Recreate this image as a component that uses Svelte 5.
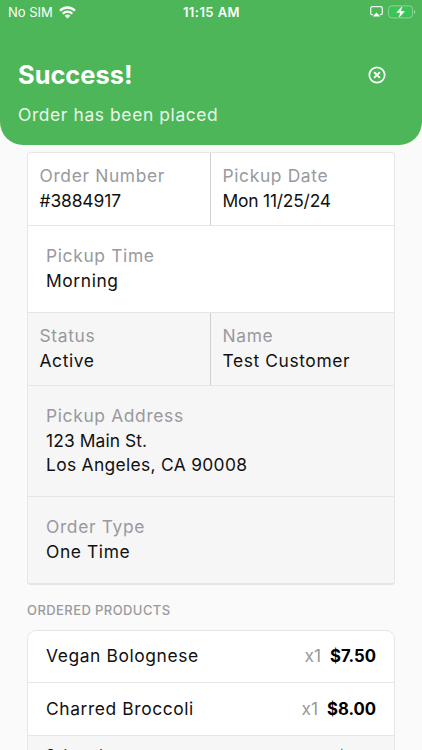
<script lang="ts">
  type Product = { name: string; qty: number; price: string };

  const products: Product[] = [
    { name: "Vegan Bolognese", qty: 1, price: "$7.50" },
    { name: "Charred Broccoli", qty: 1, price: "$8.00" },
  ];
</script>

<div class="screen">
  <header>
    <div class="status-bar">
      <div class="carrier">
        <span>No SIM</span>
        <svg width="17" height="13" viewBox="0 0 17 13" aria-hidden="true">
          <g fill="none" stroke="#fff" stroke-width="2.3">
            <path d="M1 4.7C5.2.4 11.8.4 16 4.7" />
            <path d="M3.7 7.7c2.7-2.7 6.9-2.7 9.6 0" />
          </g>
          <path d="M5.7 9.7c1.6-1.5 4-1.5 5.6 0L8.5 12.6z" fill="#fff" />
        </svg>
      </div>
      <time>11:15 AM</time>
      <div class="indicators">
        <svg width="13" height="12" viewBox="0 0 13 12" aria-hidden="true">
          <path
            d="M3.2 8.6H2.1A1.4 1.4 0 0 1 .7 7.2V2.1A1.4 1.4 0 0 1 2.1.7h8.8a1.4 1.4 0 0 1 1.4 1.4v5.1a1.4 1.4 0 0 1-1.4 1.4H9.8"
            fill="none"
            stroke="#e6f6e8"
            stroke-width="1.3"
          />
          <path d="M6.5 6.4 10.2 10.6H2.8z" fill="#fff" />
        </svg>
        <svg width="28" height="14" viewBox="0 0 28 14" aria-hidden="true">
          <rect x=".6" y=".9" width="24" height="12" rx="3.4" fill="none" stroke="#93d59b" />
          <rect x="2.3" y="2.6" width="20.6" height="8.6" rx="2" fill="#36c759" />
          <path d="M26 5v4q1.4-.6 1.4-2T26 5z" fill="#93d59b" />
          <path
            d="M14.9 0 7.8 7.9h4L10.1 14l7.3-8.1h-4.1z"
            fill="#fff"
            stroke="#4db658"
            stroke-width=".5"
          />
        </svg>
      </div>
    </div>
    <div class="title-row">
      <h1>Success!</h1>
      <button type="button" aria-label="Close">
        <svg width="18" height="18" viewBox="0 0 18 18" aria-hidden="true">
          <g fill="none" stroke="#fff">
            <circle cx="9" cy="9" r="7.7" stroke-width="1.7" />
            <path d="m6.1 6.1 5.8 5.8m0-5.8-5.8 5.8" stroke-width="2" />
          </g>
        </svg>
      </button>
    </div>
    <p class="subtitle">Order has been placed</p>
  </header>

  <main>
    <dl class="details">
      <div class="pair">
        <div><dt>Order Number</dt><dd class="number">#3884917</dd></div>
        <div><dt>Pickup Date</dt><dd class="date">Mon 11/25/24</dd></div>
      </div>
      <div class="single"><dt>Pickup Time</dt><dd>Morning</dd></div>
      <div class="pair shaded">
        <div><dt>Status</dt><dd>Active</dd></div>
        <div><dt>Name</dt><dd>Test Customer</dd></div>
      </div>
      <div class="single shaded">
        <dt>Pickup Address</dt>
        <dd class="street">123 Main St.</dd>
        <dd class="city">Los Angeles, CA 90008</dd>
      </div>
      <div class="single shaded last"><dt>Order Type</dt><dd>One Time</dd></div>
    </dl>

    <h2>ORDERED PRODUCTS</h2>
    <ul>
      {#each products as product}
        <li>
          <span class="name">{product.name}</span>
          <span class="qty">x{product.qty}</span>
          <strong>{product.price}</strong>
        </li>
      {/each}
      <li class="subtotal shaded">
        <span>Subtotal</span>
        <span class="amount">$15.50</span>
      </li>
    </ul>
  </main>
</div>

<style>
  :global(body) {
    margin: 0;
    background: #fafafa;
  }

  .screen {
    height: 750px;
    overflow: hidden;
    background: #fafafa;
    color: #111;
    font-family: Inter, "Liberation Sans", sans-serif;
    font-size: 17.4px;
    line-height: 24.7px;
  }

  header {
    box-sizing: border-box;
    height: 145px;
    border-radius: 0 0 23px 23px;
    background: #4db658;
    color: #fff;
  }

  .status-bar {
    display: grid;
    grid-template-columns: 1fr auto 1fr;
    align-items: center;
    height: 23px;
    padding: 0 6px 0 8px;
    font-size: 13px;
  }

  .carrier,
  .indicators {
    display: flex;
    align-items: center;
    gap: 6px;
  }

  .indicators {
    justify-content: flex-end;
    gap: 5px;
  }

  time {
    padding-right: 1px;
    font-weight: 600;
    letter-spacing: 0.45px;
  }

  .title-row {
    display: flex;
    align-items: center;
    justify-content: space-between;
    height: 36px;
    padding: 34px 36px 0 18px;
  }

  h1 {
    margin: 0;
    font-size: 25.4px;
    font-weight: 700;
  }

  button {
    display: flex;
    border: 0;
    padding: 0;
    background: none;
  }

  .subtitle {
    margin: 10px 18px 0;
    color: #e9f7ea;
    letter-spacing: 0.62px;
  }

  main {
    padding: 7px 27px 0;
  }

  dl,
  dt,
  dd,
  ul {
    margin: 0;
    padding: 0;
  }

  .details {
    overflow: hidden;
    border: 1px solid #e6e6e8;
    border-bottom: 2px solid #e4e4e4;
    border-radius: 4px;
    background: #fff;
    letter-spacing: 0.6px;
  }

  dt {
    color: #99999e;
    letter-spacing: 0.65px;
  }

  .number {
    letter-spacing: -0.1px;
  }

  .date {
    letter-spacing: -0.2px;
  }

  .street {
    letter-spacing: 0.1px;
  }

  .city {
    letter-spacing: 0.32px;
  }

  .pair {
    display: grid;
    grid-template-columns: 183px 1fr;
    box-sizing: border-box;
    height: 73px;
    border-bottom: 1px solid #e6e6e8;
  }

  .pair > div {
    padding: 11.4px 11.5px 0;
  }

  .pair > div:first-child {
    border-right: 1px solid #cfcfd2;
  }

  .single {
    padding: 18.2px 18px;
    border-bottom: 1px solid #e6e6e8;
  }

  .last {
    border-bottom: 0;
  }

  .shaded {
    background: #f6f6f6;
  }

  h2 {
    margin: 13px 0 7.2px;
    color: #99999e;
    font-size: 13px;
    font-weight: 500;
    letter-spacing: 0.42px;
  }

  ul {
    overflow: hidden;
    border: 1px solid #e6e6e8;
    border-radius: 9px;
    background: #fff;
    list-style: none;
  }

  li {
    display: flex;
    align-items: center;
    box-sizing: border-box;
    height: 52.5px;
    border-bottom: 1px solid #e6e6e8;
    padding: 0 18px;
  }

  .name {
    flex: 1;
    letter-spacing: 0.6px;
  }

  .qty {
    margin-right: 9px;
    color: #99999e;
  }

  strong {
    color: #000;
    font-size: 16.7px;
  }

  .subtotal {
    align-items: flex-start;
    justify-content: space-between;
    padding-top: 7px;
    font-size: 14px;
    letter-spacing: 0.3px;
  }

  .amount {
    font-size: 13.4px;
    letter-spacing: -0.6px;
  }
</style>
